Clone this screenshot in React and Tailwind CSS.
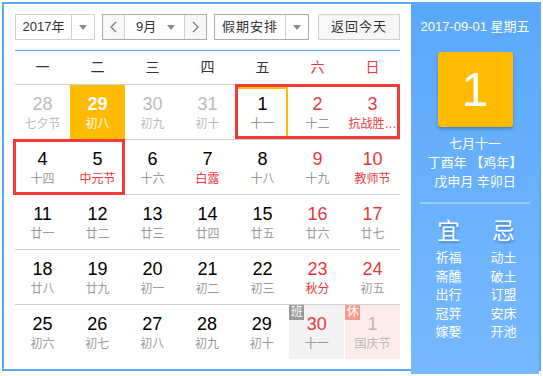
import React from "react";

const F = "font-['Liberation_Sans','Noto_Sans_CJK_SC',sans-serif]";

const weeks = [
  [
    { d: 28, l: "七夕节", o: true },
    { d: 29, l: "初八", today: true },
    { d: 30, l: "初九", o: true },
    { d: 31, l: "初十", o: true },
    { d: 1, l: "十一", sel: true },
    { d: 2, l: "十二", we: true },
    { d: 3, l: "抗战胜…", we: true, f: true },
  ],
  [
    { d: 4, l: "十四" },
    { d: 5, l: "中元节", f: true },
    { d: 6, l: "十六" },
    { d: 7, l: "白露", f: true },
    { d: 8, l: "十八" },
    { d: 9, l: "十九", we: true },
    { d: 10, l: "教师节", we: true, f: true },
  ],
  [
    { d: 11, l: "廿一" },
    { d: 12, l: "廿二" },
    { d: 13, l: "廿三" },
    { d: 14, l: "廿四" },
    { d: 15, l: "廿五" },
    { d: 16, l: "廿六", we: true },
    { d: 17, l: "廿七", we: true },
  ],
  [
    { d: 18, l: "廿八" },
    { d: 19, l: "廿九" },
    { d: 20, l: "初一" },
    { d: 21, l: "初二" },
    { d: 22, l: "初三" },
    { d: 23, l: "秋分", we: true, f: true },
    { d: 24, l: "初五", we: true },
  ],
  [
    { d: 25, l: "初六" },
    { d: 26, l: "初七" },
    { d: 27, l: "初八" },
    { d: 28, l: "初九" },
    { d: 29, l: "初十" },
    { d: 30, l: "十一", we: true, ban: true },
    { d: 1, l: "国庆节", o: true, xiu: true },
  ],
];

function Tri() {
  return (
    <span className="inline-block w-0 h-0 border-l-[4px] border-r-[4px] border-t-[5px] border-l-transparent border-r-transparent border-t-[#8a8a8a]" />
  );
}

function Cell({ c }) {
  let bg = "";
  if (c.today) bg = "bg-[#ffbb00]";
  else if (c.ban) bg = "bg-[#f2f2f2] mr-[1px]";
  else if (c.xiu) bg = "bg-[#fdecea]";
  let num = "text-black";
  let lun = "text-[#999]";
  if (c.o) {
    num = "text-[#bbb]";
    lun = "text-[#bbb]";
  } else if (c.we) num = "text-[#e8383d]";
  if (c.f) lun = "text-[#e8383d]";
  if (c.today) {
    num = "text-white";
    lun = "text-white";
  }
  return (
    <div className={`relative w-[55px] h-[54px] flex flex-col items-center ${bg}`}>
      {c.sel && (
        <div className="absolute left-[1px] top-[2px] right-[2px] bottom-[0px] border-2 border-[#ffbb00]" />
      )}
      {c.ban && (
        <div className="absolute left-0 top-0 w-[15px] h-[15px] bg-[#9b9b9b] text-white text-[12px] leading-[15px] text-center">
          班
        </div>
      )}
      {c.xiu && (
        <div className="absolute left-0 top-0 w-[15px] h-[15px] bg-[#f49b8e] text-white text-[12px] leading-[15px] text-center">
          休
        </div>
      )}
      <div className={`mt-[9px] text-[18px] leading-[20px] ${c.today ? "font-bold" : ""} ${num}`}>{c.d}</div>
      <div className={`mt-[2px] text-[12px] leading-[16px] whitespace-nowrap ${lun}`}>{c.l}</div>
    </div>
  );
}

export default function App() {
  const yi = ["祈福", "斋醮", "出行", "冠笄", "嫁娶"];
  const ji = ["动土", "破土", "订盟", "安床", "开池"];
  return (
    <div className={`w-[543px] h-[376px] bg-white pl-[2px] pt-[2px] ${F}`}>
      <div className="w-[539px] h-[369px] border-2 border-[#5ca9f9] flex">
        {/* left */}
        <div className="w-[407px] h-full bg-white pl-[11px] pt-[10px]">
          {/* toolbar */}
          <div className="flex items-center h-[26px] text-[13px] text-[#333]">
            <div className="flex w-[80px] h-[26px] border border-[#d0d0d0]">
              <div className="w-[55px] flex items-center justify-center">2017年</div>
              <div className="flex-1 border-l border-[#d0d0d0] flex items-center justify-center">
                <Tri />
              </div>
            </div>
            <div className="flex h-[26px] ml-[7px] border border-[#aaa]">
              <div className="w-[22px] bg-[#f7f7f7] flex items-center justify-center border-r border-[#d0d0d0]">
                <svg width="7" height="12" viewBox="0 0 7 12">
                  <polyline points="6,1 1,6 6,11" fill="none" stroke="#777" strokeWidth="1.2" />
                </svg>
              </div>
              <div className="w-[60px] flex items-center pl-[11px] pr-[9px] justify-between bg-white border-r border-[#d0d0d0]">
                <span>9月</span>
                <Tri />
              </div>
              <div className="w-[21px] bg-[#f7f7f7] flex items-center justify-center">
                <svg width="7" height="12" viewBox="0 0 7 12">
                  <polyline points="1,1 6,6 1,11" fill="none" stroke="#777" strokeWidth="1.2" />
                </svg>
              </div>
            </div>
            <div className="flex h-[26px] w-[95px] ml-[7px] border border-[#aaa]">
              <div className="w-[70px] flex items-center justify-center tracking-[1px]">假期安排</div>
              <div className="flex-1 border-l border-[#d0d0d0] flex items-center justify-center">
                <Tri />
              </div>
            </div>
            <div className="w-[82px] h-[26px] ml-[9px] border border-[#d0d0d0] bg-[#f7f7f7] flex items-center justify-center tracking-[1px]">
              返回今天
            </div>
          </div>
          {/* calendar */}
          <div className="w-[385px] mt-[10px] border-t border-[#5ca9f9]">
            <div className="grid grid-cols-7 h-[34px] border-b border-[#cfcfcf] text-[14px] text-[#333]">
              {["一", "二", "三", "四", "五", "六", "日"].map((w, i) => (
                <div key={w} className={`flex items-center justify-center ${i >= 5 ? "text-[#e8383d]" : ""}`}>
                  {w}
                </div>
              ))}
            </div>
            {weeks.map((row, ri) => (
              <div
                key={ri}
                className={`relative flex ${ri < 4 ? "border-b border-[#cfcfcf]" : ""}`}
              >
                {row.map((c, ci) => (
                  <Cell key={ci} c={c} />
                ))}
                {ri === 0 && (
                  <div className="absolute left-[220px] top-[-1px] w-[165px] h-[55px] border-[3px] border-[#f63a3a] pointer-events-none" />
                )}
                {ri === 1 && (
                  <div className="absolute left-[-2px] top-[-1px] w-[112px] h-[56px] border-[3px] border-[#f63a3a] pointer-events-none" />
                )}
              </div>
            ))}
          </div>
        </div>
        {/* right */}
        <div className="flex-1 h-[370px] bg-gradient-to-b from-[#5aa8fb] to-[#76b9ff] text-white flex flex-col items-center">
          <div className="mt-[14px] text-[13px] leading-[18px] whitespace-nowrap">2017-09-01 星期五</div>
          <div className="mt-[16px] w-[75px] h-[75px] bg-[#ffbb00] rounded-[3px] shadow-[0_2px_3px_rgba(0,0,0,0.25)] flex items-center justify-center text-[48px] leading-none">
            1
          </div>
          <div className="mt-[7px] text-[13px] leading-[19px] text-center whitespace-nowrap">
            <div>七月十一</div>
            <div>丁酉年 【鸡年】</div>
            <div>戊申月 辛卯日</div>
          </div>
          <div className="mt-[11px] w-[110px] h-[2px] bg-white/30" />
          <div className="mt-[14px] flex gap-[25px] mr-[-2px]">
            {[
              ["宜", yi],
              ["忌", ji],
            ].map(([t, list]) => (
              <div key={t} className="flex flex-col items-center w-[30px]">
                <div className="text-[23px] leading-[26px] [text-shadow:1px_2px_2px_rgba(0,60,140,0.35)]">{t}</div>
                <div className="mt-[5px] text-[13px] leading-[18.5px] flex flex-col items-center whitespace-nowrap">
                  {list.map((s) => (
                    <div key={s}>{s}</div>
                  ))}
                </div>
              </div>
            ))}
          </div>
        </div>
      </div>
    </div>
  );
}
